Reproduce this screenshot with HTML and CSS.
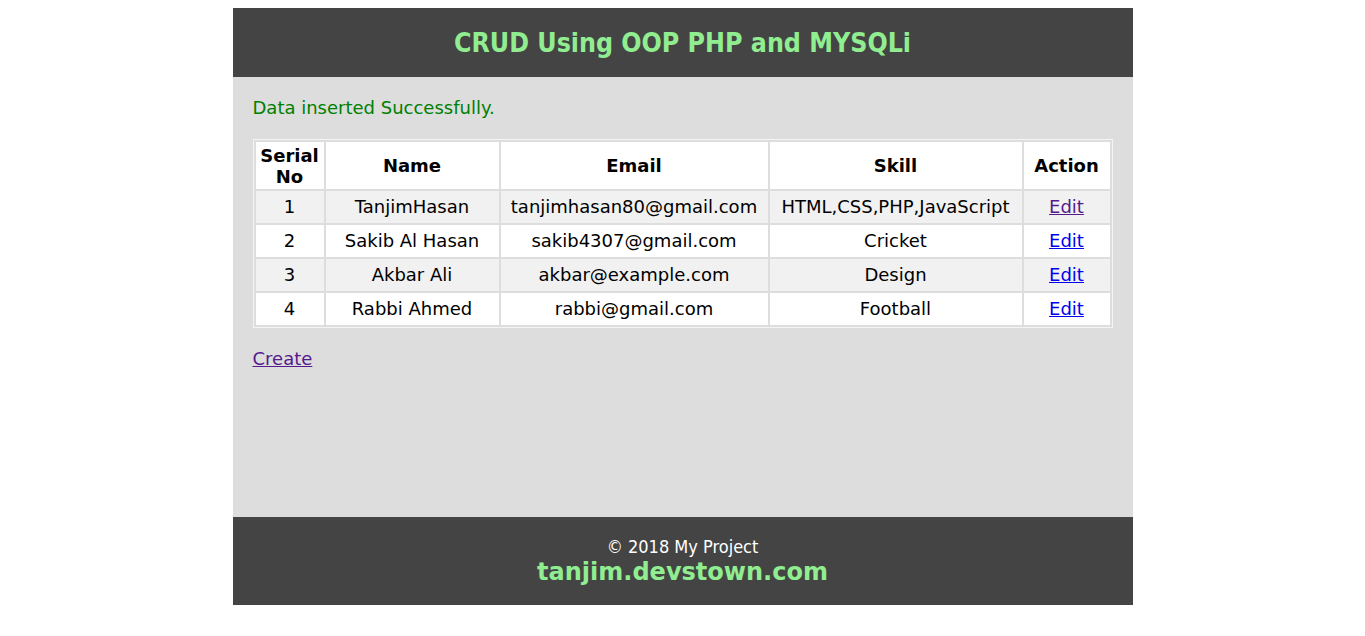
FILE: index.html
```html
<!DOCTYPE html>
<html>
<head>
<meta charset="utf-8">
<title>CRUD Using OOP PHP and MYSQLi</title>
<link rel="stylesheet" href="styles.css">
</head>
<body>
<div class="wrapper">
  <header class="header">
    <h1 class="title">CRUD Using OOP PHP and MYSQLi</h1>
  </header>
  <main class="content">
    <p class="msg">Data inserted Successfully.</p>
    <table class="data">
      <thead>
        <tr>
          <th class="c-serial">Serial<br>No</th>
          <th class="c-name">Name</th>
          <th class="c-email">Email</th>
          <th class="c-skill">Skill</th>
          <th class="c-action">Action</th>
        </tr>
      </thead>
      <tbody>
        <tr class="odd">
          <td>1</td><td>TanjimHasan</td><td>tanjimhasan80@gmail.com</td><td>HTML,CSS,PHP,JavaScript</td><td><a class="visited" href="#">Edit</a></td>
        </tr>
        <tr>
          <td>2</td><td>Sakib Al Hasan</td><td>sakib4307@gmail.com</td><td>Cricket</td><td><a href="#">Edit</a></td>
        </tr>
        <tr class="odd">
          <td>3</td><td>Akbar Ali</td><td>akbar@example.com</td><td>Design</td><td><a href="#">Edit</a></td>
        </tr>
        <tr>
          <td>4</td><td>Rabbi Ahmed</td><td>rabbi@gmail.com</td><td>Football</td><td><a href="#">Edit</a></td>
        </tr>
      </tbody>
    </table>
    <p class="create"><a class="visited" href="#">Create</a></p>
  </main>
  <footer class="footer">
    <p class="copy">© 2018 My Project</p>
    <p class="site">tanjim.devstown.com</p>
  </footer>
</div>
</body>
</html>
```

FILE: styles.css
```css
body {
  margin: 8px;
  background: #fff;
  font-family: "DejaVu Sans", Verdana, sans-serif;
}
.wrapper {
  width: 900px;
  margin: 0 auto;
}
.header {
  background: #444;
  padding: 19px 0 18px;
  text-align: center;
}
.title {
  margin: 0;
  font-family: "DejaVu Sans Condensed", "DejaVu Sans", sans-serif;
  font-stretch: condensed;
  font-weight: bold;
  font-size: 26.5px;
  line-height: 32px;
  color: #90ee90;
}
.content {
  background: #ddd;
  height: 440px;
  box-sizing: border-box;
  padding: 20px;
}
.msg {
  margin: 0 0 20px;
  font-size: 18px;
  line-height: 22px;
  color: green;
}
.data {
  width: 860px;
  border: 1px solid #f4f4f4;
  border-spacing: 2px;
  background: #ddd;
  font-size: 18px;
}
.data th,
.data td {
  box-sizing: border-box;
  background: #fff;
  text-align: center;
  padding: 0 4px;
  color: #000;
}
.data th {
  height: 47px;
  line-height: 21px;
  font-weight: bold;
}
.data td {
  height: 32px;
  line-height: 22px;
}
.data tr.odd td {
  background: #f1f1f1;
}
.c-serial { width: 68px; }
.c-name { width: 173px; }
.c-email { width: 267px; }
.c-skill { width: 252px; }
.c-action { width: 86px; }
a {
  color: #0000ee;
}
a.visited {
  color: #551a8b;
}
.create {
  margin: 20px 0 0;
  font-size: 18px;
  line-height: 22px;
}
.footer {
  background: #444;
  height: 88px;
  box-sizing: border-box;
  padding-top: 20px;
  text-align: center;
}
.copy {
  margin: 0;
  color: #fff;
  font-family: "DejaVu Sans Condensed", "DejaVu Sans", sans-serif;
  font-stretch: condensed;
  font-size: 18px;
  line-height: 20px;
}
.site {
  margin: 0;
  color: #90ee90;
  font-weight: bold;
  font-size: 24px;
  line-height: 30px;
}
```
